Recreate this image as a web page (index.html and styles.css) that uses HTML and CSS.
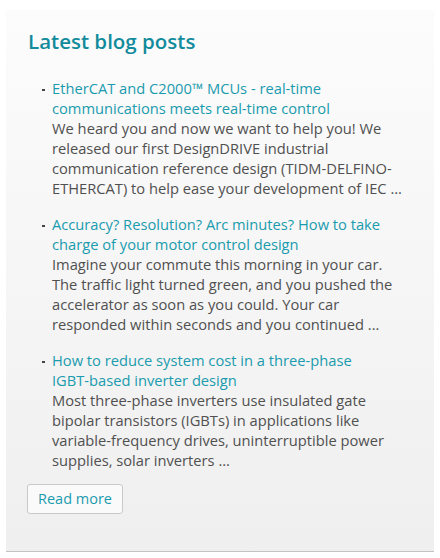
FILE: index.html
```html
<!DOCTYPE html>
<html>
<head>
<meta charset="utf-8">
<link rel="stylesheet" href="styles.css">
</head>
<body>
<section class="card">
  <h2 class="title">Latest blog posts</h2>
  <ul class="posts">
    <li class="post">
      <div class="post-body">
        <a class="post-link" href="#">EtherCAT and C2000™ MCUs - real-time communications meets real-time control</a>
        <p class="excerpt">We heard you and now we want to help you! We released our first DesignDRIVE industrial communication reference design (TIDM-DELFINO-ETHERCAT) to help ease your development of IEC ...</p>
      </div>
    </li>
    <li class="post">
      <div class="post-body">
        <a class="post-link" href="#">Accuracy? Resolution? Arc minutes? How to take charge of your motor control design</a>
        <p class="excerpt">Imagine your commute this morning in your car. The traffic light turned green, and you pushed the accelerator as soon as you could. Your car responded within seconds and you continued ...</p>
      </div>
    </li>
    <li class="post">
      <div class="post-body">
        <a class="post-link" href="#">How to reduce system cost in a three-phase IGBT-based inverter design</a>
        <p class="excerpt">Most three-phase inverters use insulated gate bipolar transistors (IGBTs) in applications like variable-frequency drives, uninterruptible power supplies, solar inverters ...</p>
      </div>
    </li>
  </ul>
  <a class="read-more" href="#">Read more</a>
</section>
</body>
</html>
```
FILE: styles.css
```css
html, body {
  margin: 0;
  padding: 0;
  background: #ffffff;
}
body {
  padding: 10px 6px 0 6px;
  font-family: "Open Sans", "Liberation Sans", sans-serif;
}
.card {
  background: linear-gradient(to bottom, #fcfcfc 0%, #efefef 100%);
  border-bottom: 1px solid #c2c2c2;
  padding: 18px 22px 37px 22px;
  height: 542px;
  box-sizing: border-box;
}
.title {
  margin: 0;
  font-size: 20.5px;
  line-height: 26px;
  font-weight: 600;
  color: #128b9c;
}
.posts {
  list-style: none;
  margin: 24px 0 0 0;
  padding: 0 0 0 14px;
}
.post {
  display: flex;
  align-items: flex-start;
  margin-bottom: 16px;
}
.post:last-child {
  margin-bottom: 14px;
}
.post::before {
  content: "";
  flex: none;
  width: 3px;
  height: 2px;
  background: #444;
  margin: 11px 7px 0 0;
}
.post-body {
  flex: 1;
  font-size: 14.7px;
  line-height: 20px;
  min-width: 0;
}
.post-link {
  display: block;
  max-width: 336px;
  color: #1a9bae;
  text-decoration: none;
}
.excerpt {
  margin: 0;
  max-width: 354px;
  color: #505050;
}
.read-more {
  display: inline-block;
  box-sizing: border-box;
  height: 30px;
  padding: 0 10px;
  line-height: 28px;
  font-size: 14.5px;
  color: #1a9bae;
  text-decoration: none;
  background: #fafafa;
  border: 1px solid #c9c9c9;
  border-radius: 3px;
  margin-left: -1px;
}
```
